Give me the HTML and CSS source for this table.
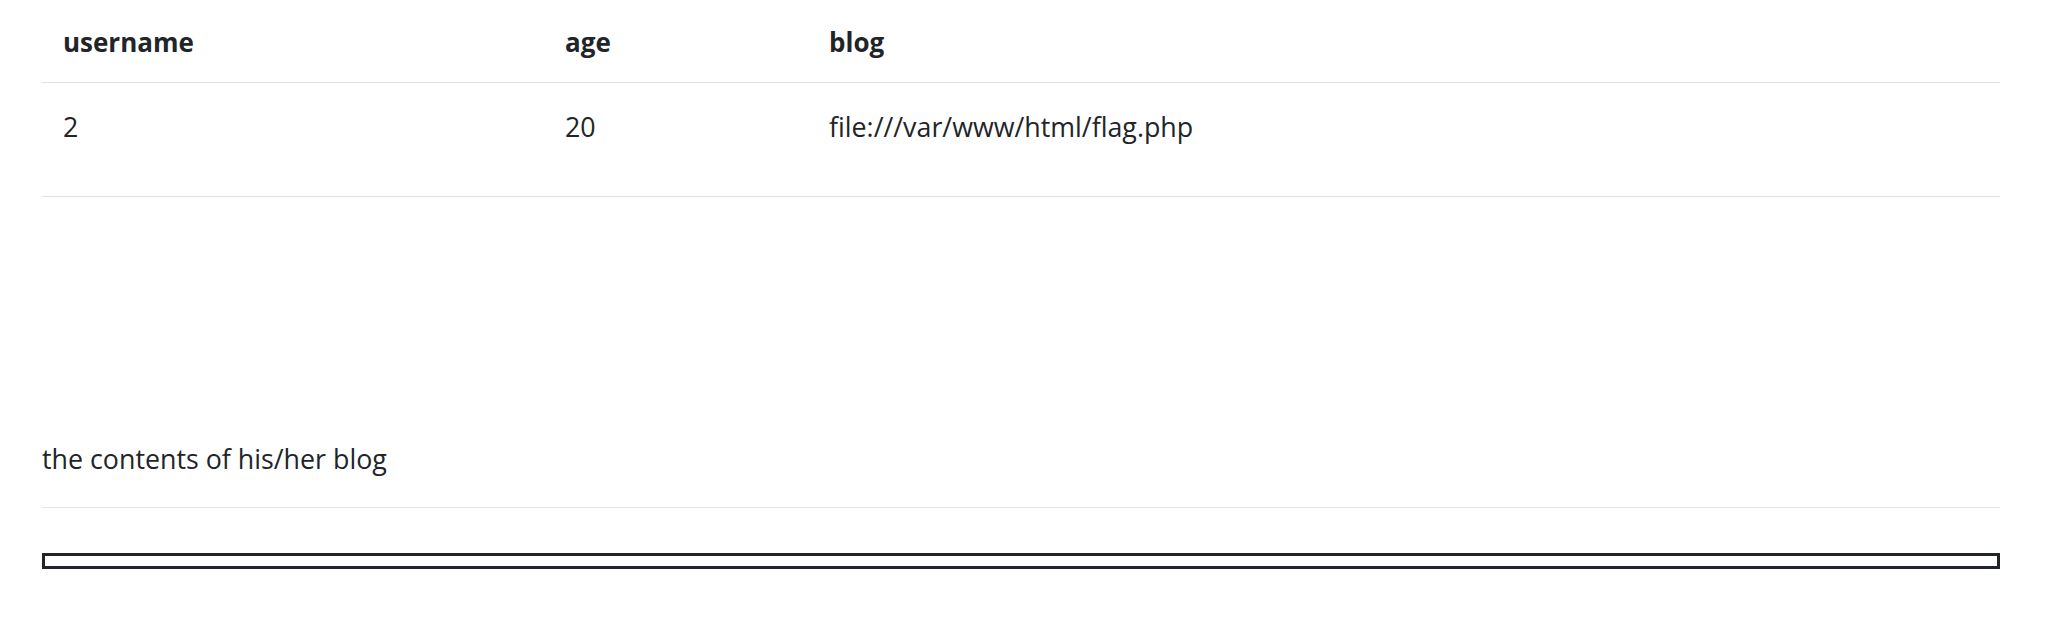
FILE: index.html
```html
<!DOCTYPE html>
<html lang="en">
<head>
    <meta charset="UTF-8">
    <title>User Info</title>
    <link rel="stylesheet" href="styles.css">
</head>
<body>
    <div class="page">
        <table class="table">
            <tr>
                <th class="col-name">username</th>
                <th class="col-age">age</th>
                <th>blog</th>
            </tr>
            <tr>
                <td>2</td>
                <td>20</td>
                <td>file:///var/www/html/flag.php</td>
            </tr>
        </table>

        <div class="spacer"></div>

        <p class="blog-title">the contents of his/her blog</p>
        <hr class="divider">

        <!-- blog frame -->
        <div class="blog-frame"></div>
    </div>
</body>
</html>
```

FILE: styles.css
```css
/* base */
body {
    margin: 0;
    font-family: "Open Sans", "Noto Sans", sans-serif;
    font-size: 26.8px;
    line-height: 42px;
    color: #212529;
    background-color: #fff;
}

.page {
    padding: 0 69px 0 42px;
}

/* table */
.table {
    width: 100%;
    border-collapse: collapse;
    border-bottom: 1px solid #dee2e6;
}

.table th,
.table td {
    text-align: left;
    vertical-align: top;
    padding: 21px 21px 19px;
}

.table th {
    font-size: 26px;
    font-weight: 700;
}

.table td {
    border-top: 1px solid #dee2e6;
    padding: 23px 21px 48px;
}

.col-name {
    width: 460px;
}

.col-age {
    width: 222px;
}

.spacer {
    height: 241px;
}

.blog-title {
    margin: 0;
}

.divider {
    margin: 27px 0 0;
    border: 0;
    border-top: 1px solid rgba(0, 0, 0, 0.1);
}

/* frame box */
.blog-frame {
    margin-top: 45px;
    height: 10px;
    border: 3px solid #212529;
}
```
